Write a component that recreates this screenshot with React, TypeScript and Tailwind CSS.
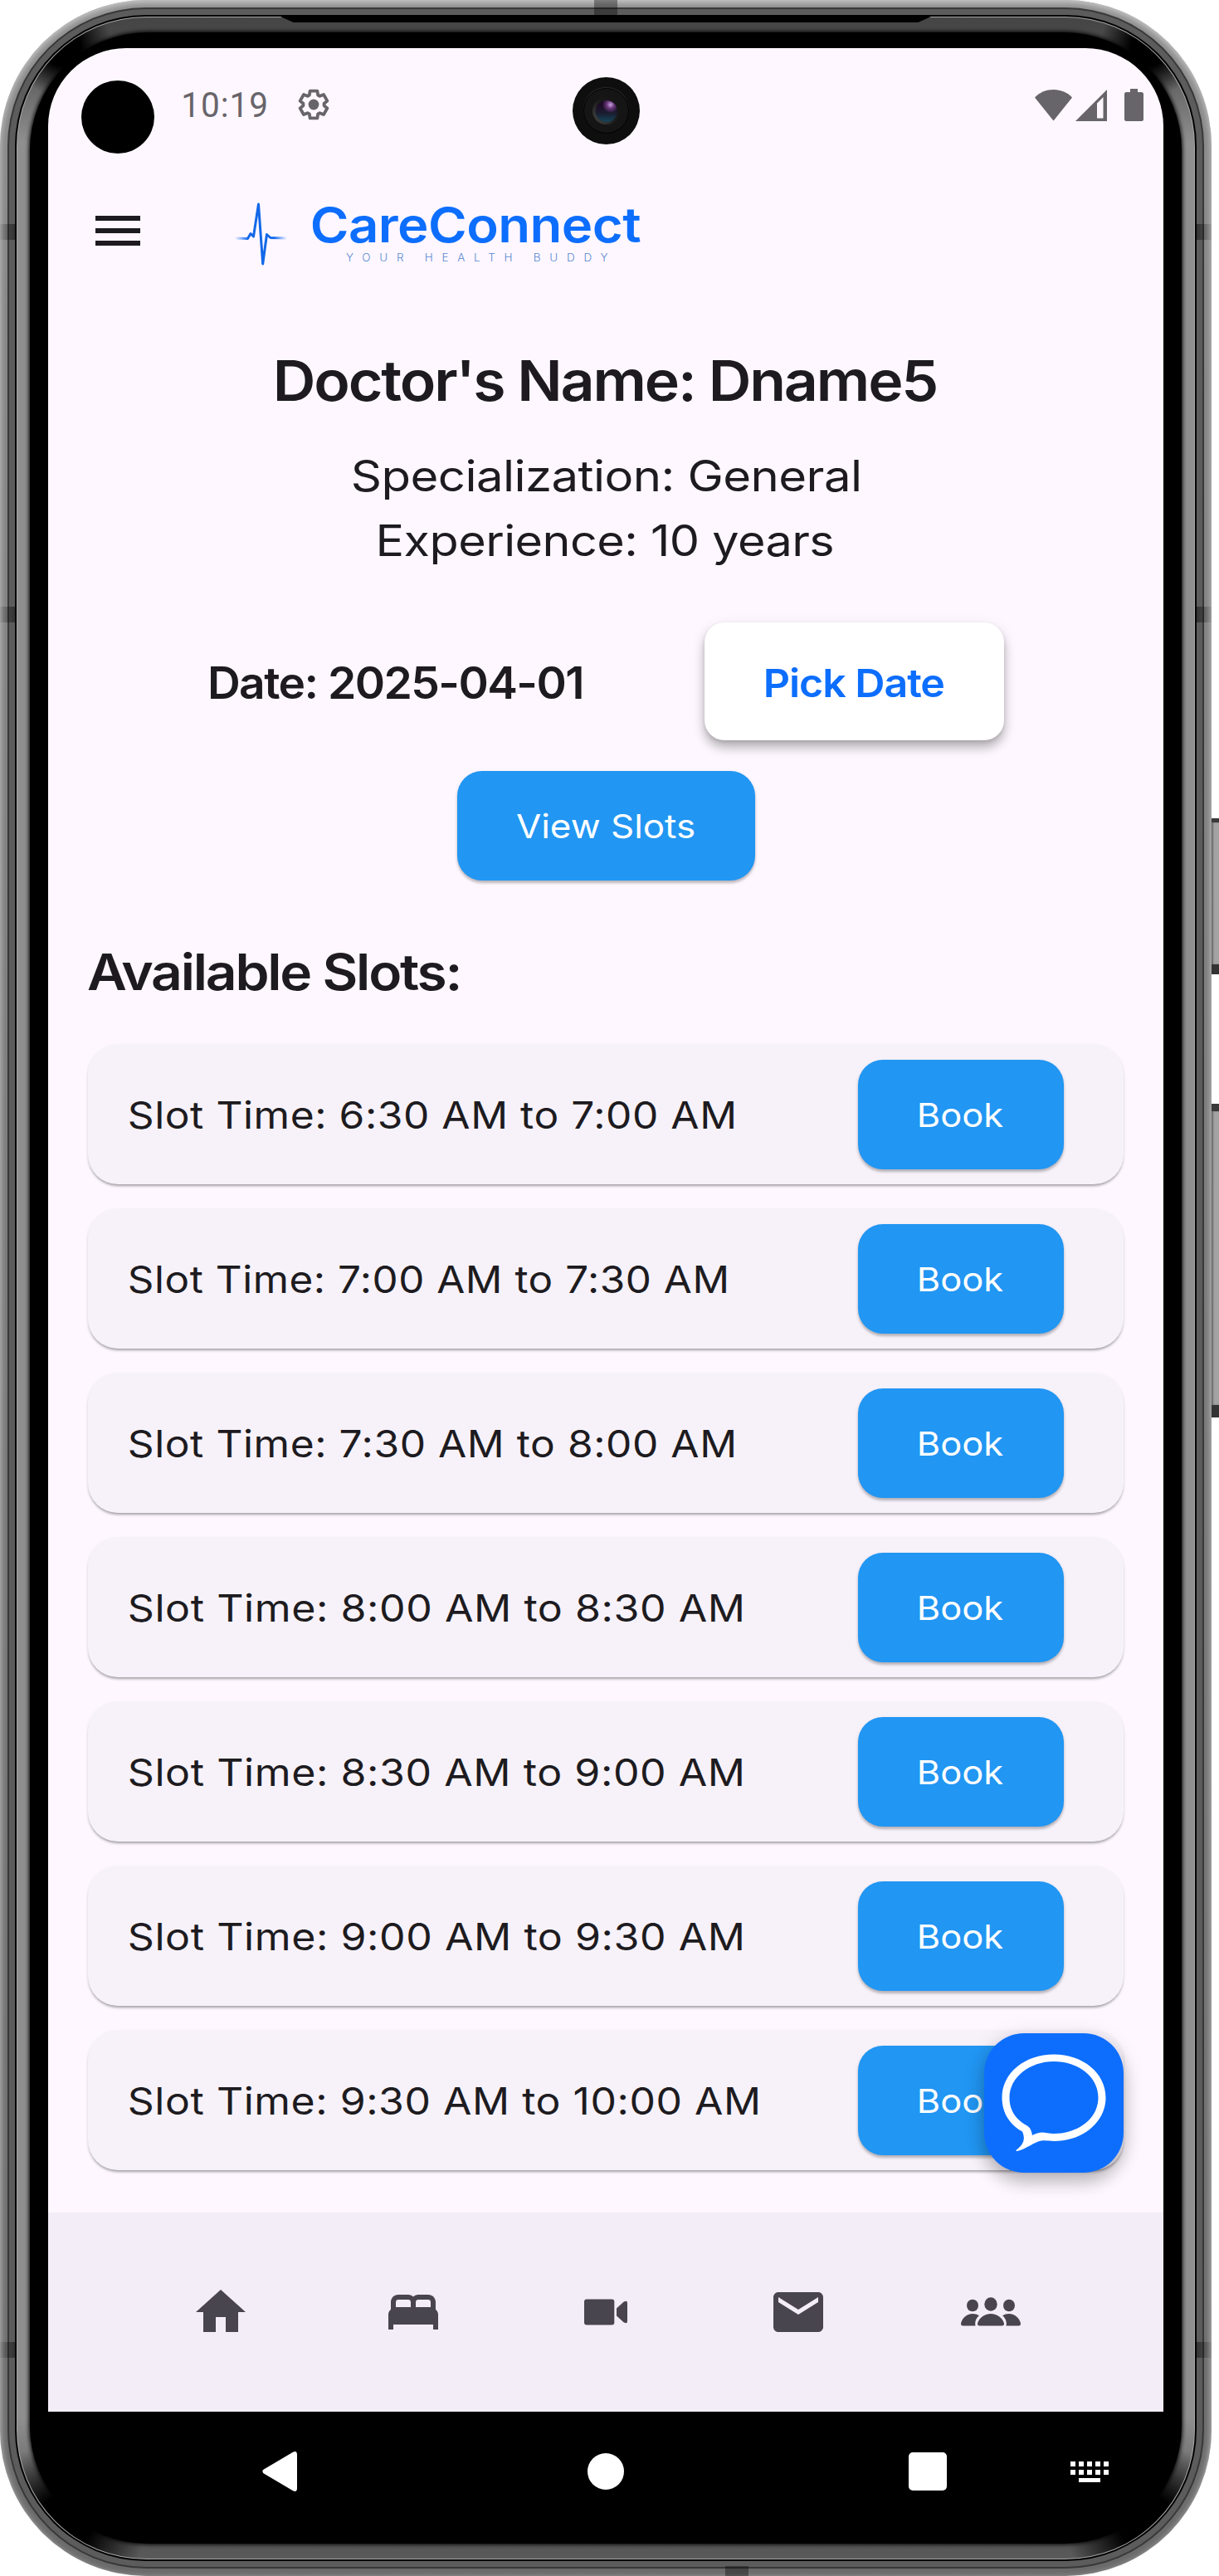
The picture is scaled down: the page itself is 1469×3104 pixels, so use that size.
import { useLayoutEffect, useRef, useState } from 'react';
import type { ReactNode } from 'react';

/** One line of wide lettering, stretched so that its ink fills `width` pixels. */
function WideText({ width, className, children }: { width: number; className: string; children: string }) {
  const ref = useRef<HTMLSpanElement>(null);
  const [transform, setTransform] = useState('none');
  useLayoutEffect(() => {
    const el = ref.current;
    const ctx = document.createElement('canvas').getContext('2d');
    if (!el || !ctx) return;
    const cs = getComputedStyle(el);
    ctx.font = `${cs.fontWeight} ${cs.fontSize} ${cs.fontFamily}`;
    if (cs.letterSpacing !== 'normal') ctx.letterSpacing = cs.letterSpacing;
    const m = ctx.measureText(children);
    const spacing = parseFloat(cs.letterSpacing) || 0;
    const right = Math.min(m.actualBoundingBoxRight, m.width - spacing);
    const scale = width / (m.actualBoundingBoxLeft + right);
    setTransform(`translateX(${m.actualBoundingBoxLeft * scale}px) scaleX(${scale})`);
  }, [width, children]);
  return (
    <div className="shrink-0 text-left" style={{ width }}>
      <span ref={ref} className={`inline-block origin-left whitespace-nowrap align-top ${className}`} style={{ transform }}>
        {children}
      </span>
    </div>
  );
}

const slots = [
  { label: 'Slot Time: 6:30 AM to 7:00 AM', width: 728 },
  { label: 'Slot Time: 7:00 AM to 7:30 AM', width: 719 },
  { label: 'Slot Time: 7:30 AM to 8:00 AM', width: 728 },
  { label: 'Slot Time: 8:00 AM to 8:30 AM', width: 738 },
  { label: 'Slot Time: 8:30 AM to 9:00 AM', width: 738 },
  { label: 'Slot Time: 9:00 AM to 9:30 AM', width: 738 },
  { label: 'Slot Time: 9:30 AM to 10:00 AM', width: 757 },
];

const gearPoints = Array.from({ length: 6 }, (_, i) => {
  const polar = (r: number, deg: number) => {
    const a = ((i * 60 + deg - 90) * Math.PI) / 180;
    return `${(19 + r * Math.cos(a)).toFixed(2)},${(19 + r * Math.sin(a)).toFixed(2)}`;
  };
  return [polar(12.6, -24), polar(17, -15), polar(17, 15), polar(12.6, 24)].join(' ');
}).join(' ');

function StatusBar() {
  return (
    <div className="relative flex h-[136px] shrink-0 items-center pl-10 pr-6">
      <div className="mt-[30px] size-[88px] rounded-full bg-black" />
      <div className="ml-[35px]">
        <WideText width={100} className="font-['Roboto'] text-[43px] leading-[50px] tracking-[1px] text-[#68656a]">10:19</WideText>
      </div>
      <svg className="ml-[38px]" width="38" height="38" viewBox="0 0 38 38">
        <polygon points={gearPoints} fill="none" stroke="#68656a" strokeWidth="3.8" strokeLinejoin="round" />
        <circle cx="19" cy="19" r="6.4" fill="#68656a" />
      </svg>
      <div className="ml-auto flex items-center">
        <svg width="45" height="39" viewBox="0 0 45 39" fill="#68656a">
          <path d="M0 10.5C6 4 14 1 22.500 1S39 4 45 10.500L22.500 38.500Z" />
        </svg>
        <svg className="ml-1" width="38" height="39" viewBox="0 0 38 39" fill="#68656a">
          <path fillRule="evenodd" d="M0 39 38 1V39ZM26 17.500V35.500H33.500V10Z" />
        </svg>
        <svg className="ml-[21px]" width="23" height="39" viewBox="0 0 23 39" fill="#68656a">
          <path d="M7 0h9v4h4.500Q23 4 23 6.500v30Q23 39 20.500 39h-18Q0 39 0 36.500v-30Q0 4 2.500 4H7Z" />
        </svg>
      </div>
      <div className="absolute left-[632px] top-[35px] flex size-[81px] items-center justify-center rounded-full bg-[#0e0e0e]">
        <div className="flex size-[55px] items-center justify-center rounded-full border border-black bg-[#151515] shadow-[0_-1px_1px_#2c2c2c]">
          <div className="flex size-[33px] items-center justify-center rounded-full bg-linear-to-tr from-[#4a4a4a] via-[#1c1c1c] to-[#111]">
            <div className="size-[26px] rounded-full bg-[radial-gradient(circle_at_68%_20%,#c9a4dc_0%,#6d3a80_16%,transparent_36%),linear-gradient(#1d0a26_20%,#1a1d30_60%,#15465a_100%)]" />
          </div>
        </div>
      </div>
    </div>
  );
}

function AppBar() {
  return (
    <div className="flex h-[168px] shrink-0 items-center pl-[57px]">
      <div className="flex w-[54px] flex-col gap-[9px]">
        <div className="h-1.5 bg-[#1d1b20]" />
        <div className="h-1.5 bg-[#1d1b20]" />
        <div className="h-1.5 bg-[#1d1b20]" />
      </div>
      <svg className="ml-[113px] mt-2" width="64" height="80" viewBox="0 0 64 80">
        <defs>
          <linearGradient id="pulse" x1="0" x2="1" gradientUnits="objectBoundingBox">
            <stop offset="0" stopColor="#0d6efd" stopOpacity="0" />
            <stop offset="0.25" stopColor="#1268e8" />
            <stop offset="0.75" stopColor="#1268e8" />
            <stop offset="1" stopColor="#0d6efd" stopOpacity="0" />
          </linearGradient>
        </defs>
        <path d="M1 45 16.500 45.500 20 39.500 23.500 43 29.500 4 34.700 76 39.500 40.500 44 44.500 64 45" fill="none" stroke="url(#pulse)" strokeWidth="3" strokeLinejoin="round" />
      </svg>
      <div className="ml-[30px] flex flex-col pt-[13px]">
        <WideText width={396} className="text-[58px] font-semibold leading-[58px] tracking-[-0.5px] text-[#0d6efd]">CareConnect</WideText>
        <div className="ml-[41px] mt-1">
          <WideText width={315} className="text-[12.5px] font-light leading-[14px] tracking-[10px] text-[#5a8ad2]">YOUR HEALTH BUDDY</WideText>
        </div>
      </div>
    </div>
  );
}

function BlueButton({ className, children }: { className: string; children: ReactNode }) {
  return (
    <button
      className={`flex h-[132px] shrink-0 items-center justify-center rounded-[30px] bg-[#2196f3] pt-0.5 shadow-[0_3px_3px_rgba(0,0,0,0.2),0_2px_5px_rgba(0,0,0,0.1)] ${className}`}
    >
      {children}
    </button>
  );
}

function BottomNav() {
  return (
    <nav className="flex h-[240px] shrink-0 items-center bg-[#f3edf7] px-[92px] text-[#49454f]">
      <div className="flex w-[232px] justify-center">
        <svg width="72" height="72" viewBox="0 0 24 24" fill="currentColor">
          <path d="M10 20v-6h4v6h5v-8h3L12 3 2 12h3v8z" />
        </svg>
      </div>
      <div className="flex w-[232px] justify-center">
        <svg width="72" height="72" viewBox="0 0 24 24" fill="currentColor">
          <path
            fillRule="evenodd"
            d="M2 19v-6c0-.8.3-1.500 1-2.100V8c0-1.700 1.300-3 3-3h4c.8 0 1.500.3 2 .8.500-.5 1.200-.8 2-.8h4c1.700 0 3 1.300 3 3v2.900c.7.600 1 1.300 1 2.100v6h-2v-2H4v2zM5 10h6V8c0-.6-.4-1-1-1H6c-.6 0-1 .4-1 1zM13 10h6V8c0-.6-.4-1-1-1h-4c-.6 0-1 .4-1 1z"
          />
        </svg>
      </div>
      <div className="flex w-[232px] justify-center">
        <svg width="52" height="32" viewBox="0 0 52 32" fill="currentColor">
          <rect width="36.300" height="31" rx="3" y=".5" />
          <path d="M39 11.500 47.500 3.800Q52 1 52 5V27Q52 31 47.500 28.200L39 20.500Z" />
        </svg>
      </div>
      <div className="flex w-[232px] justify-center">
        <svg width="72" height="72" viewBox="0 0 24 24" fill="currentColor">
          <path d="M20 4H4c-1.100 0-1.990.9-1.990 2L2 18c0 1.100.9 2 2 2h16c1.100 0 2-.9 2-2V6c0-1.100-.9-2-2-2zm0 4l-8 5-8-5V6l8 5 8-5v2z" />
        </svg>
      </div>
      <div className="flex w-[232px] justify-center">
        <svg width="72" height="36" viewBox="0 0 72 36" fill="currentColor">
          <ellipse cx="14" cy="10" rx="7" ry="7.300" />
          <ellipse cx="58" cy="10" rx="7" ry="7.300" />
          <ellipse cx="36" cy="8.500" rx="7.700" ry="8.300" />
          <path d="M20 32.500c0-4.500 6.500-12.500 16-12.500s16 8 16 12.500Q52 34.500 49.500 34.500H22.500Q20 34.500 20 32.500Z" />
          <path d="M17.500 34.500H2.500Q0 34.500 0 32.500C0 28 5.500 20 14 20q4.500 0 8 2.300C19 24.500 16.300 29 17.500 34.500Z" />
          <path d="M54.500 34.500h15Q72 34.500 72 32.500C72 28 66.500 20 58 20q-4.500 0-8 2.300C53 24.500 55.700 29 54.500 34.500Z" />
        </svg>
      </div>
    </nav>
  );
}

function SystemBar() {
  return (
    <div className="relative flex h-36 shrink-0 items-center text-white">
      <svg className="ml-[258px]" width="43" height="48" viewBox="0 0 43 48" fill="white">
        <path d="M1.500 21.800 37 .8Q42-1.500 42 4V44Q42 49.500 37 47.200L1.500 26.200Q-.8 24 1.500 21.800Z" />
      </svg>
      <div className="ml-[349px] size-11 rounded-full bg-white" />
      <div className="ml-[343px] size-[46px] rounded-[5px] bg-white" />
      <div className="ml-[149px] flex w-[46px] flex-col gap-1">
        <div className="flex justify-between">
          {[0, 1, 2, 3, 4].map((k) => <div key={k} className="h-1.5 w-1.5 bg-white" />)}
        </div>
        <div className="flex justify-between">
          {[0, 1, 2, 3, 4].map((k) => <div key={k} className="h-1.5 w-1.5 bg-white" />)}
        </div>
        <div className="mx-auto h-[5px] w-[26px] bg-white" />
      </div>
    </div>
  );
}

function Screen() {
  return (
    <div className="flex h-[2992px] w-[1344px] flex-col overflow-hidden rounded-t-[94px] font-['Inter',sans-serif] text-[#1d1b20]">
      <div className="relative flex h-[2848px] shrink-0 flex-col bg-[#fef7ff]">
        <StatusBar />
        <AppBar />
        <div className="mt-[49px] flex flex-col items-center">
          <WideText width={795} className="text-[67px] font-semibold leading-[96px] tracking-[-2px]">Doctor's Name: Dname5</WideText>
          <div className="h-7" />
          <WideText width={610} className="text-[52px] leading-[78px] tracking-[-0.5px]">Specialization: General</WideText>
          <WideText width={546} className="text-[52px] leading-[78px] tracking-[-0.5px]">Experience: 10 years</WideText>
        </div>
        <div className="mt-[59px] flex h-[142px] items-center gap-[148px] pl-[195px]">
          <div className="pt-[3px]">
            <WideText width={448} className="text-[53px] font-semibold leading-[72px] tracking-[-1.5px]">Date: 2025-04-01</WideText>
          </div>
          <button className="flex h-[142px] w-[361px] items-center justify-center rounded-3xl bg-white pt-1 shadow-[0_9px_12px_rgba(0,0,0,0.2),0_6px_18px_rgba(0,0,0,0.12),0_2px_4px_rgba(0,0,0,0.1)]">
            <WideText width={214} className="text-[47px] font-semibold leading-[64px] tracking-[-1px] text-[#0d6efd]">Pick Date</WideText>
          </button>
        </div>
        <div className="mt-[37px] flex justify-center">
          <BlueButton className="w-[359px]">
            <WideText width={214} className="text-[40px] leading-[56px] text-white">View Slots</WideText>
          </BlueButton>
        </div>
        <div className="mt-[70px] pl-12">
          <WideText width={447} className="text-[60px] font-semibold leading-[80px] tracking-[-2px]">Available Slots:</WideText>
        </div>
        <div className="mt-[47px] flex grow flex-col gap-[29px] px-12">
          {slots.map((slot) => (
            <div
              key={slot.label}
              className="flex h-[169px] shrink-0 items-center justify-between rounded-[36px] bg-[#f7f2fa] pl-[50px] pr-[72px] shadow-[0_3px_3px_-1px_rgba(0,0,0,0.3),0_2px_4px_rgba(0,0,0,0.08)]"
            >
              <div className="pt-[3px]">
                <WideText width={slot.width} className="text-[45px] leading-[64px] tracking-[0.5px]">{slot.label}</WideText>
              </div>
              <BlueButton className="w-[248px]">
                <WideText width={101} className="text-[40px] leading-[56px] text-white">Book</WideText>
              </BlueButton>
            </div>
          ))}
        </div>
        <BottomNav />
        <div className="absolute right-12 top-[2392px] size-[168px] rounded-[48px] bg-[#0d6efd] shadow-[0_12px_20px_rgba(0,0,0,0.2),0_4px_26px_rgba(0,0,0,0.13)]">
          <svg width="168" height="168" viewBox="0 0 168 168" fill="white">
            <path
              fillRule="evenodd"
              d="M46 118.500C30 110 21.500 95 21.500 77.500C21.500 48 49 25.500 84 25.500S146.500 48 146.500 77.500S119 130 84 130C79 130 74 129 69 129.500C60 131 52 139 40 142Q37.500 142 39 140.500Q52 131 46 118.500ZM58 123C62 121 66 119.500 70 119.500C74 119.500 78 121 84 121C113 121 137.500 103 137.500 77.500S113 34 84 34S30.500 53 30.500 77.500C30.500 93 38 104 52 111.500Q57 115 58 123Z"
            />
          </svg>
        </div>
      </div>
      <SystemBar />
    </div>
  );
}

function SideKey({ className }: { className: string }) {
  return (
    <div className={`absolute left-[1460px] w-[9px] border-b-[#333] border-t-[#3a3a3a] bg-[#a3a3a3] shadow-[inset_2px_0_2px_#6b6b6b] ${className}`} />
  );
}

export default function App() {
  return (
    <div className="relative h-[3104px] w-[1469px] overflow-hidden bg-white">
      <SideKey className="top-[986px] h-[188px] border-b-[12px] border-t-[5px]" />
      <SideKey className="top-[1330px] h-[378px] border-b-[15px] border-t-[9px]" />
      <div className="h-[3104px] w-[1460px] rounded-[176px] bg-linear-to-b from-[#8c8c8c] via-[#858585] via-10% to-[#6a6a6a] p-[9px] shadow-[inset_0_3px_9px_#cfcfcf]">
        <div className="h-full rounded-[167px] bg-[#383838] p-[2px]">
          <div className="h-full rounded-[165px] bg-[#5c5c5c] p-[7px]">
            <div className="h-full rounded-[158px] bg-black p-[2px]">
              <div className="h-full rounded-[156px] bg-[#a6a6a6] p-px">
                <div className="h-full rounded-[155px] bg-[radial-gradient(circle_at_54px_36px,#000_22px,transparent_60px),radial-gradient(circle_at_calc(100%_-_54px)_36px,#000_22px,transparent_60px),radial-gradient(circle_at_54px_calc(100%_-_40px),#000_34px,transparent_100px),radial-gradient(circle_at_calc(100%_-_54px)_calc(100%_-_40px),#000_34px,transparent_100px),linear-gradient(#454545_0,#4c4c4c_40px,#8f8f8f_150px,#8f8f8f_calc(100%_-_170px),#505050_calc(100%_-_40px),#5a5a5a_100%)] px-[15px] py-[18px]">
                  <div className="h-full rounded-[142px] bg-black px-[22px] pt-[19px] shadow-[0_0_5px_1px_#000]">
                    <Screen />
                  </div>
                </div>
              </div>
            </div>
          </div>
        </div>
      </div>
      <div className="absolute left-[338px] top-[20px] h-[7px] w-[784px] bg-black [clip-path:polygon(0_0,100%_0,98%_100%,2%_100%)]" />
      <div className="absolute left-[716px] top-0 h-[19px] w-7 bg-black/35" />
      <div className="absolute left-[874px] top-[3092px] h-3 w-7 bg-black/35" />
      <div className="absolute left-0 top-[270px] h-[19px] w-[18px] bg-linear-to-r from-black/5 to-black/45" />
      <div className="absolute left-0 top-[731px] h-[19px] w-[18px] bg-linear-to-r from-black/5 to-black/45" />
      <div className="absolute left-0 top-[2822px] h-[19px] w-[18px] bg-linear-to-r from-black/5 to-black/45" />
      <div className="absolute left-[1442px] top-[270px] h-[19px] w-[18px] bg-linear-to-l from-black/5 to-black/45" />
      <div className="absolute left-[1442px] top-[731px] h-[19px] w-[18px] bg-linear-to-l from-black/5 to-black/45" />
      <div className="absolute left-[1442px] top-[2822px] h-[19px] w-[18px] bg-linear-to-l from-black/5 to-black/45" />
    </div>
  );
}
